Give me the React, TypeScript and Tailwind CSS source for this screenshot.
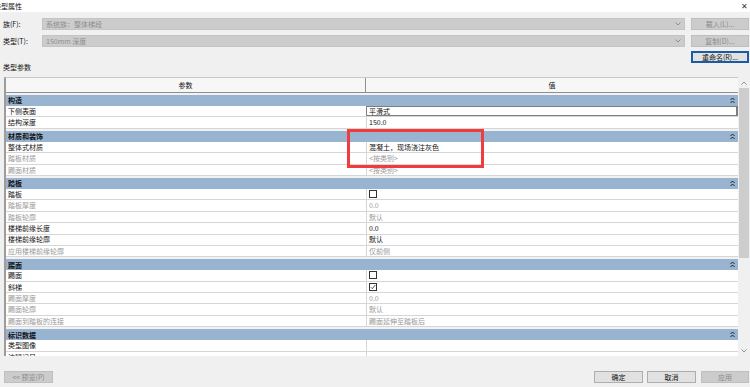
import React from "react";

type Row = { label: string; value?: string; lg?: boolean; vg?: boolean; cb?: "on" | "off"; edit?: boolean };
type Section = { name: string; rows: Row[] };

const sections: Section[] = [
  { name: "构造", rows: [{ label: "下侧表面", value: "平滑式", edit: true }, { label: "结构深度", value: "150.0" }] },
  {
    name: "材质和装饰",
    rows: [
      { label: "整体式材质", value: "混凝土，现场浇注灰色" },
      { label: "踏板材质", value: "<按类别>", lg: true, vg: true },
      { label: "踢面材质", value: "<按类别>", lg: true, vg: true },
    ],
  },
  {
    name: "踏板",
    rows: [
      { label: "踏板", cb: "off" },
      { label: "踏板厚度", value: "0.0", lg: true, vg: true },
      { label: "踏板轮廓", value: "默认", lg: true, vg: true },
      { label: "楼梯前缘长度", value: "0.0" },
      { label: "楼梯前缘轮廓", value: "默认" },
      { label: "应用楼梯前缘轮廓", value: "仅前侧", lg: true, vg: true },
    ],
  },
  {
    name: "踢面",
    rows: [
      { label: "踢面", cb: "off" },
      { label: "斜梯", cb: "on" },
      { label: "踢面厚度", value: "0.0", lg: true, vg: true },
      { label: "踢面轮廓", value: "默认", lg: true, vg: true },
      { label: "踢面到踏板的连接", value: "踢面延伸至踏板后", lg: true, vg: true },
    ],
  },
  { name: "标识数据", rows: [{ label: "类型图像", value: "" }, { label: "注释记号", value: "" }] },
];

const font = { fontFamily: '"Noto Sans CJK SC", "Liberation Sans", sans-serif' };

function Collapse() {
  return (
    <svg width="5" height="7" viewBox="0 0 5 7" className="shrink-0">
      <path d="M0.5 3 L2.5 1 L4.5 3 M0.5 6 L2.5 4 L4.5 6" stroke="#222" strokeWidth="1" fill="none" />
    </svg>
  );
}

function Chevron({ up }: { up?: boolean }) {
  return (
    <svg width="6" height="4" viewBox="0 0 6 4">
      <path d={up ? "M0.5 3.5 L3 1 L5.5 3.5" : "M0.5 0.5 L3 3 L5.5 0.5"} stroke="#888" strokeWidth="0.9" fill="none" />
    </svg>
  );
}

function Checkbox({ on }: { on: boolean }) {
  return (
    <div className="w-[8px] h-[8px] border border-[#333] bg-white flex items-center justify-center">
      {on && (
        <svg width="6" height="6" viewBox="0 0 6 6">
          <path d="M0.8 3.2 L2.3 4.7 L5.3 1" stroke="#444" strokeWidth="0.9" fill="none" />
        </svg>
      )}
    </div>
  );
}

function Btn({ children, w, disabled, focus }: { children: React.ReactNode; w: string; disabled?: boolean; focus?: boolean }) {
  return (
    <div
      className={
        "h-[12px] flex items-center justify-center text-[7px] leading-none " +
        w +
        " " +
        (disabled
          ? "bg-[#cccccc] border border-[#bfbfbf] text-[#8a8a8a]"
          : focus
          ? "bg-[#e1e1e1] border-2 border-[#1b5aa5] text-[#111]"
          : "bg-[#e1e1e1] border border-[#adadad] text-[#111]")
      }
    >
      {children}
    </div>
  );
}

export default function App() {
  return (
    <div className="w-[750px] h-[387px] bg-[#f0f0f0] relative overflow-hidden text-[7px] text-[#111]" style={font}>
      {/* title bar */}
      <div className="h-[12px] bg-white flex items-center justify-between">
        <span className="ml-[-6px] text-[7px] leading-none">类型属性</span>
        <span className="mr-[2px] text-[8px] leading-none text-[#333]">✕</span>
      </div>

      {/* family / type rows */}
      <div className="mt-[6px] flex items-center h-[12px]">
        <div className="w-[42px] pl-[3px]">族(F):</div>
        <div className="w-[643px] h-[12px] bg-[#cccccc] border border-[#c4c4c4] flex items-center justify-between px-[3px] text-[#8c8c8c]">
          <span>系统族：整体梯段</span>
          <Chevron />
        </div>
        <div className="ml-[6px]">
          <Btn w="w-[58px]" disabled>
            载入(L)...
          </Btn>
        </div>
      </div>
      <div className="mt-[5px] flex items-center h-[12px]">
        <div className="w-[42px] pl-[3px]">类型(T):</div>
        <div className="w-[643px] h-[12px] bg-[#cccccc] border border-[#c4c4c4] flex items-center justify-between px-[3px] text-[#8c8c8c]">
          <span>150mm 深度</span>
          <Chevron />
        </div>
        <div className="ml-[6px]">
          <Btn w="w-[58px]" disabled>
            复制(D)...
          </Btn>
        </div>
      </div>
      <div className="mt-[4px] flex justify-end pr-[1px]">
        <Btn w="w-[58px]" focus>
          重命名(R)...
        </Btn>
      </div>
      <div className="h-[9px] pl-[3px] leading-[9px] mt-[0px]">类型参数</div>

      {/* table + scrollbar */}
      <div className="mt-[5px] flex h-[279px]">
        <div className="ml-[4px] w-[734px] h-full bg-white border-l-2 border-l-[#9c9c9c] border-t border-t-[#c8c8c8] overflow-hidden flex flex-col">
          <div className="h-[15px] shrink-0 flex bg-[#f7f7f7] border-b border-b-[#8f8f8f]">
            <div className="w-[360px] flex items-center justify-center border-r border-r-[#8f8f8f]">参数</div>
            <div className="flex-1 flex items-center justify-center">值</div>
          </div>
          <div className="flex-1 overflow-hidden bg-[#f2f2f2]">
            {sections.map((s) => (
              <div key={s.name}>
                <div className="mt-[2px] h-[11px] bg-[#99b4d1] flex items-center justify-between pl-[2px] pr-[3px] font-bold">
                  <span>{s.name}</span>
                  <Collapse />
                </div>
                {s.rows.map((r) => (
                  <div key={r.label} className="h-[11.4px] flex bg-white border-b border-b-[#d6d6d6]">
                    <div className={"w-[360px] pl-[2px] flex items-center " + (r.lg ? "text-[#9a9a9a]" : "text-[#111]")}>
                      {r.label}
                    </div>
                    <div
                      className={
                        "flex-1 flex items-center pl-[2px] " +
                        (r.edit ? "border border-[#7e7e7e] border-r-2" : "border-l border-l-[#d6d6d6]") +
                        " " +
                        (r.vg ? "text-[#9a9a9a]" : "text-[#111]")
                      }
                    >
                      {r.cb ? <Checkbox on={r.cb === "on"} /> : r.value}
                    </div>
                  </div>
                ))}
              </div>
            ))}
          </div>
        </div>
        {/* scrollbar */}
        <div className="w-[12px] h-full bg-[#f0f0f0] flex flex-col items-center">
          <div className="h-[11px] flex items-center justify-center">
            <Chevron up />
          </div>
          <div className="w-[10px] h-[170px] bg-[#cdcdcd]" />
          <div className="flex-1" />
          <div className="h-[11px] flex items-center justify-center">
            <Chevron />
          </div>
        </div>
      </div>

      {/* bottom buttons */}
      <div className="mt-[15px] flex items-center">
        <div className="ml-[4px]">
          <Btn w="w-[49px]" disabled>
            &lt;&lt; 预览(P)
          </Btn>
        </div>
        <div className="flex-1" />
        <Btn w="w-[49px]">确定</Btn>
        <div className="ml-[4px]">
          <Btn w="w-[49px]">取消</Btn>
        </div>
        <div className="ml-[5px] mr-[1px]">
          <Btn w="w-[48px]" disabled>
            应用
          </Btn>
        </div>
      </div>

      {/* red highlight box */}
      <div className="absolute left-[347px] top-[129px] w-[137px] h-[39px] border-[3px] border-[#f03c3c]" />
    </div>
  );
}
